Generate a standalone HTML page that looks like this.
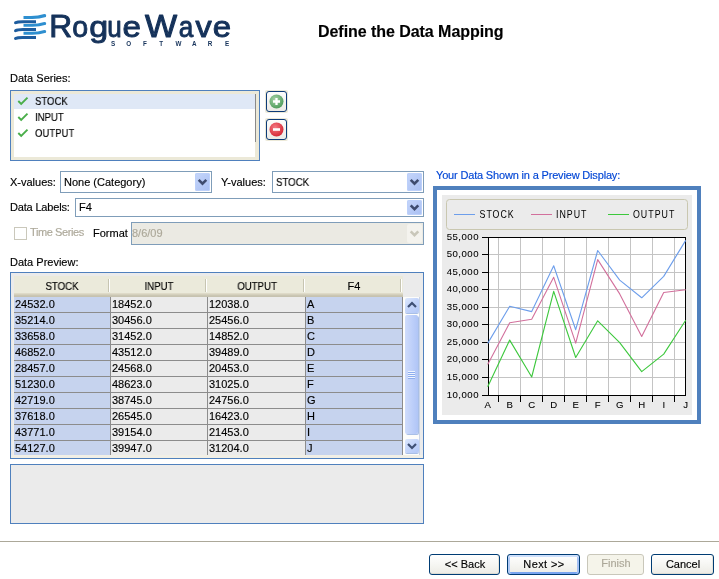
<!DOCTYPE html>
<html><head><meta charset="utf-8"><style>
html,body{margin:0;padding:0;background:#fff;}
body{width:719px;height:579px;position:relative;overflow:hidden;font-family:"Liberation Sans",sans-serif;}
.t{position:absolute;white-space:pre;line-height:16px;height:16px;will-change:transform;-webkit-text-stroke:0.15px currentColor;}
.b{position:absolute;}
</style></head><body>
<svg class="b" style="left:0;top:0;will-change:transform" width="240" height="52" viewBox="0 0 240 52"><path transform="translate(0,0.0)" d="M23.5,16 H31 Q38,16 44.3,14.1 Q46.9,14.0 45.9,16.9 Q39,19.1 31,18.9 H23.5 Z" fill="#2e8fd0"/><path transform="translate(0,7.9)" d="M23.5,16 H31 Q38,16 44.3,14.1 Q46.9,14.0 45.9,16.9 Q39,19.1 31,18.9 H23.5 Z" fill="#2e8fd0"/><path transform="translate(0,15.8)" d="M23.5,16 H31 Q38,16 44.3,14.1 Q46.9,14.0 45.9,16.9 Q39,19.1 31,18.9 H23.5 Z" fill="#2e8fd0"/><path transform="translate(0,0.0)" d="M36,20.2 H23 Q17,20.3 14.6,21.5 Q13.2,23.6 15.2,24.3 Q19,23.1 23,23.2 H36 Z" fill="#1d5c9e"/><path transform="translate(0,7.9)" d="M36,20.2 H23 Q17,20.3 14.6,21.5 Q13.2,23.6 15.2,24.3 Q19,23.1 23,23.2 H36 Z" fill="#1d5c9e"/><path transform="translate(0,15.8)" d="M36,20.2 H23 Q17,20.3 14.6,21.5 Q13.2,23.6 15.2,24.3 Q19,23.1 23,23.2 H36 Z" fill="#1d5c9e"/><text transform="translate(51.8,36.8) scale(1.016,1)" x="-2.50" y="0" font-family="Liberation Sans" font-size="31.2" fill="#15325a" stroke="#15325a" stroke-width="1.0" stroke-linejoin="round">R</text><text transform="translate(73.5,36.8) scale(0.915,0.95)" x="-1.25" y="0" font-family="Liberation Sans" font-size="31.2" fill="#15325a" stroke="#15325a" stroke-width="1.0" stroke-linejoin="round">o</text><text transform="translate(90.5,36.8) scale(1.090,0.95)" x="-1.25" y="0" font-family="Liberation Sans" font-size="31.2" fill="#15325a" stroke="#15325a" stroke-width="1.0" stroke-linejoin="round">g</text><text transform="translate(108.8,36.8) scale(0.835,0.95)" x="-1.87" y="0" font-family="Liberation Sans" font-size="31.2" fill="#15325a" stroke="#15325a" stroke-width="1.0" stroke-linejoin="round">u</text><text transform="translate(123.9,36.8) scale(1.064,0.95)" x="-1.25" y="0" font-family="Liberation Sans" font-size="31.2" fill="#15325a" stroke="#15325a" stroke-width="1.0" stroke-linejoin="round">e</text><text transform="translate(145.1,36.8) scale(1.091,1)" x="0.00" y="0" font-family="Liberation Sans" font-size="31.2" fill="#15325a" stroke="#15325a" stroke-width="1.0" stroke-linejoin="round">W</text><text transform="translate(179.7,36.8) scale(0.838,0.95)" x="-1.25" y="0" font-family="Liberation Sans" font-size="31.2" fill="#15325a" stroke="#15325a" stroke-width="1.0" stroke-linejoin="round">a</text><text transform="translate(195.5,36.8) scale(1.038,0.95)" x="0.00" y="0" font-family="Liberation Sans" font-size="31.2" fill="#15325a" stroke="#15325a" stroke-width="1.0" stroke-linejoin="round">v</text><text transform="translate(214.0,36.8) scale(1.057,0.95)" x="-1.25" y="0" font-family="Liberation Sans" font-size="31.2" fill="#15325a" stroke="#15325a" stroke-width="1.0" stroke-linejoin="round">e</text><text x="113.1" y="45.6" text-anchor="middle" font-family="Liberation Sans" font-weight="bold" font-size="6.3" fill="#15325a">S</text><text x="128.6" y="45.6" text-anchor="middle" font-family="Liberation Sans" font-weight="bold" font-size="6.3" fill="#15325a">O</text><text x="144.9" y="45.6" text-anchor="middle" font-family="Liberation Sans" font-weight="bold" font-size="6.3" fill="#15325a">F</text><text x="161.3" y="45.6" text-anchor="middle" font-family="Liberation Sans" font-weight="bold" font-size="6.3" fill="#15325a">T</text><text x="178.4" y="45.6" text-anchor="middle" font-family="Liberation Sans" font-weight="bold" font-size="6.3" fill="#15325a">W</text><text x="194.2" y="45.6" text-anchor="middle" font-family="Liberation Sans" font-weight="bold" font-size="6.3" fill="#15325a">A</text><text x="210" y="45.6" text-anchor="middle" font-family="Liberation Sans" font-weight="bold" font-size="6.3" fill="#15325a">R</text><text x="227" y="45.6" text-anchor="middle" font-family="Liberation Sans" font-weight="bold" font-size="6.3" fill="#15325a">E</text></svg>
<div class="t" style="left:318.3px;top:23.66px;font-size:16px;color:#000;font-weight:bold;letter-spacing:-0.05px;">Define the Data Mapping</div>
<div class="t" style="left:10px;top:70.19px;font-size:11px;color:#000;">Data Series:</div>
<div class="b" style="left:10px;top:90px;width:250px;height:71px;border:1px solid #4f80bd;background:#ece9d8;box-sizing:border-box;"></div>
<div class="b" style="left:14px;top:94px;width:241px;height:63px;background:#fff;"></div>
<div class="b" style="left:14px;top:94px;width:241px;height:15px;background:#dfe8f6;"></div>
<div class="b" style="left:255px;top:94px;width:1px;height:48px;background:#8a8a8a;"></div>
<svg class="b" style="left:17px;top:96px" width="12" height="10" viewBox="0 0 12 10"><path d="M1.3,5 L4.2,8 L10.5,1.6" fill="none" stroke="#4aae4a" stroke-width="1.9"/></svg>
<div class="t" style="left:34.5px;top:93.19px;font-size:11px;color:#000;transform:scaleX(0.87);transform-origin:0 0;">STOCK</div>
<svg class="b" style="left:17px;top:112px" width="12" height="10" viewBox="0 0 12 10"><path d="M1.3,5 L4.2,8 L10.5,1.6" fill="none" stroke="#4aae4a" stroke-width="1.9"/></svg>
<div class="t" style="left:34.5px;top:109.19px;font-size:11px;color:#000;transform:scaleX(0.87);transform-origin:0 0;">INPUT</div>
<svg class="b" style="left:17px;top:128px" width="12" height="10" viewBox="0 0 12 10"><path d="M1.3,5 L4.2,8 L10.5,1.6" fill="none" stroke="#4aae4a" stroke-width="1.9"/></svg>
<div class="t" style="left:34.5px;top:125.19px;font-size:11px;color:#000;transform:scaleX(0.87);transform-origin:0 0;">OUTPUT</div>
<div class="b" style="left:265px;top:90px;width:23px;height:23px;background:#ece9d8;border-radius:2px;"></div><div class="b" style="left:266px;top:91px;width:21px;height:21px;border:1px solid #0d3b78;border-radius:3px;background:linear-gradient(#fdfdfb,#ecebe6);box-sizing:border-box;"></div><svg class="b" style="left:266px;top:91px" width="21" height="21"><defs><radialGradient id="ga" cx="40%" cy="35%" r="70%"><stop offset="0" stop-color="#a6d2a6"/><stop offset="1" stop-color="#4b9a58"/></radialGradient></defs><circle cx="10.5" cy="10.5" r="7" fill="url(#ga)"/><path d="M10.5,7 V14 M7,10.5 H14" stroke="#fff" stroke-width="2.3"/></svg>
<div class="b" style="left:265px;top:118px;width:23px;height:23px;background:#ece9d8;border-radius:2px;"></div><div class="b" style="left:266px;top:119px;width:21px;height:21px;border:1px solid #0d3b78;border-radius:3px;background:linear-gradient(#fdfdfb,#ecebe6);box-sizing:border-box;"></div><svg class="b" style="left:266px;top:119px" width="21" height="21"><defs><radialGradient id="gr" cx="40%" cy="35%" r="70%"><stop offset="0" stop-color="#f47a82"/><stop offset="1" stop-color="#d42432"/></radialGradient></defs><circle cx="10.5" cy="10.5" r="7" fill="url(#gr)"/><path d="M7,10.5 H14" stroke="#fff" stroke-width="2.6"/></svg>
<div class="t" style="left:10px;top:173.69px;font-size:11px;color:#000;">X-values:</div>
<div class="b" style="left:60px;top:171px;width:152px;height:22px;border:1px solid #7f9db9;background:#fff;box-sizing:border-box;"></div><div class="b" style="left:195px;top:173px;width:15px;height:18px;background:linear-gradient(135deg,#c6d6fa,#b4c8f6 60%,#a9bff2);border-radius:2px;box-shadow:inset 0 0 0 1px #bcd0fa;"></div><svg class="b" style="left:195px;top:173px" width="15" height="18"><path d="M3.7,6.8 L7.5,10.6 L11.3,6.8" fill="none" stroke="#3e4b6e" stroke-width="2.6"/></svg>
<div class="t" style="left:64px;top:173.69px;font-size:11px;color:#000;">None (Category)</div>
<div class="t" style="left:221px;top:173.69px;font-size:11px;color:#000;">Y-values:</div>
<div class="b" style="left:272px;top:171px;width:152px;height:22px;border:1px solid #7f9db9;background:#fff;box-sizing:border-box;"></div><div class="b" style="left:407px;top:173px;width:15px;height:18px;background:linear-gradient(135deg,#c6d6fa,#b4c8f6 60%,#a9bff2);border-radius:2px;box-shadow:inset 0 0 0 1px #bcd0fa;"></div><svg class="b" style="left:407px;top:173px" width="15" height="18"><path d="M3.7,6.8 L7.5,10.6 L11.3,6.8" fill="none" stroke="#3e4b6e" stroke-width="2.6"/></svg>
<div class="t" style="left:275.5px;top:173.69px;font-size:11px;color:#000;transform:scaleX(0.88);transform-origin:0 0;">STOCK</div>
<div class="t" style="left:10px;top:199.19px;font-size:11px;color:#000;letter-spacing:-0.18px;">Data Labels:</div>
<div class="b" style="left:75px;top:198px;width:349px;height:19px;border:1px solid #7f9db9;background:#fff;box-sizing:border-box;"></div><div class="b" style="left:407px;top:200px;width:15px;height:15px;background:linear-gradient(135deg,#c6d6fa,#b4c8f6 60%,#a9bff2);border-radius:2px;box-shadow:inset 0 0 0 1px #bcd0fa;"></div><svg class="b" style="left:407px;top:200px" width="15" height="15"><path d="M3.7,5.3 L7.5,9.1 L11.3,5.3" fill="none" stroke="#3e4b6e" stroke-width="2.6"/></svg>
<div class="t" style="left:79px;top:199.19px;font-size:11px;color:#000;">F4</div>
<div class="b" style="left:14px;top:227px;width:13px;height:13px;border:1px solid #cac8bb;box-sizing:border-box;background:#fff;"></div>
<div class="t" style="left:29.5px;top:224.19px;font-size:11px;color:#aca899;letter-spacing:-0.4px;">Time Series</div>
<div class="t" style="left:93.3px;top:224.79px;font-size:11px;color:#000;">Format</div>
<div class="b" style="left:131px;top:222px;width:293px;height:23px;border:1px solid #7f9db9;background:#ebeae3;box-sizing:border-box;"></div><div class="b" style="left:407px;top:224px;width:15px;height:19px;background:#f4f3ee;border-radius:2px;"></div><svg class="b" style="left:407px;top:224px" width="15" height="19"><path d="M3.7,7.3 L7.5,11.1 L11.3,7.3" fill="none" stroke="#c9c7ba" stroke-width="2.6"/></svg>
<div class="t" style="left:132.2px;top:225.19px;font-size:11px;color:#aca899;">8/6/09</div>
<div class="t" style="left:10px;top:253.79px;font-size:11px;color:#000;">Data Preview:</div>
<div class="b" style="left:10px;top:272px;width:414px;height:187px;border:1px solid #4f80bd;background:#ebebeb;box-sizing:border-box;"></div>
<div class="b" style="left:11px;top:455px;width:412px;height:3px;background:#f1efe6;"></div>
<div class="b" style="left:13px;top:297px;width:1px;height:158px;background:#f1efe6;"></div>
<div class="b" style="left:14px;top:276px;width:389px;height:21px;background:linear-gradient(#ebeadb 0,#ebeadb 17px,#dedac8 17px,#dedac8 18px,#d4d0bd 18px,#d4d0bd 19px,#cac6b3 19px,#cac6b3 20px,#c6c2af 20px);"></div>
<div class="t" style="left:-38.0px;width:200px;text-align:center;top:277.69px;font-size:11px;color:#000;transform:scaleX(0.88);transform-origin:50% 0;">STOCK</div>
<div class="b" style="left:108px;top:279px;width:1px;height:13px;background:#c7c5b2;"></div>
<div class="b" style="left:109px;top:279px;width:1px;height:13px;background:#fff;"></div>
<div class="t" style="left:59.0px;width:200px;text-align:center;top:277.69px;font-size:11px;color:#000;transform:scaleX(0.88);transform-origin:50% 0;">INPUT</div>
<div class="b" style="left:205px;top:279px;width:1px;height:13px;background:#c7c5b2;"></div>
<div class="b" style="left:206px;top:279px;width:1px;height:13px;background:#fff;"></div>
<div class="t" style="left:156.5px;width:200px;text-align:center;top:277.69px;font-size:11px;color:#000;transform:scaleX(0.88);transform-origin:50% 0;">OUTPUT</div>
<div class="b" style="left:303px;top:279px;width:1px;height:13px;background:#c7c5b2;"></div>
<div class="b" style="left:304px;top:279px;width:1px;height:13px;background:#fff;"></div>
<div class="t" style="left:254.0px;width:200px;text-align:center;top:277.69px;font-size:11px;color:#000;">F4</div>
<div class="b" style="left:400px;top:279px;width:1px;height:13px;background:#c7c5b2;"></div>
<div class="b" style="left:401px;top:279px;width:1px;height:13px;background:#fff;"></div>
<div class="b" style="left:14px;top:297px;width:96px;height:158px;background:#c6d3ee;"></div>
<div class="b" style="left:306px;top:297px;width:96px;height:158px;background:#c6d3ee;"></div>
<div class="t" style="left:15px;top:296.19px;font-size:11px;color:#000;">24532.0</div>
<div class="t" style="left:112px;top:296.19px;font-size:11px;color:#000;">18452.0</div>
<div class="t" style="left:209px;top:296.19px;font-size:11px;color:#000;">12038.0</div>
<div class="t" style="left:307px;top:296.19px;font-size:11px;color:#000;">A</div>
<div class="b" style="left:14px;top:312px;width:389px;height:1px;background:#8c8c8c;"></div>
<div class="t" style="left:15px;top:312.19px;font-size:11px;color:#000;">35214.0</div>
<div class="t" style="left:112px;top:312.19px;font-size:11px;color:#000;">30456.0</div>
<div class="t" style="left:209px;top:312.19px;font-size:11px;color:#000;">25456.0</div>
<div class="t" style="left:307px;top:312.19px;font-size:11px;color:#000;">B</div>
<div class="b" style="left:14px;top:328px;width:389px;height:1px;background:#8c8c8c;"></div>
<div class="t" style="left:15px;top:328.19px;font-size:11px;color:#000;">33658.0</div>
<div class="t" style="left:112px;top:328.19px;font-size:11px;color:#000;">31452.0</div>
<div class="t" style="left:209px;top:328.19px;font-size:11px;color:#000;">14852.0</div>
<div class="t" style="left:307px;top:328.19px;font-size:11px;color:#000;">C</div>
<div class="b" style="left:14px;top:344px;width:389px;height:1px;background:#8c8c8c;"></div>
<div class="t" style="left:15px;top:344.19px;font-size:11px;color:#000;">46852.0</div>
<div class="t" style="left:112px;top:344.19px;font-size:11px;color:#000;">43512.0</div>
<div class="t" style="left:209px;top:344.19px;font-size:11px;color:#000;">39489.0</div>
<div class="t" style="left:307px;top:344.19px;font-size:11px;color:#000;">D</div>
<div class="b" style="left:14px;top:360px;width:389px;height:1px;background:#8c8c8c;"></div>
<div class="t" style="left:15px;top:360.19px;font-size:11px;color:#000;">28457.0</div>
<div class="t" style="left:112px;top:360.19px;font-size:11px;color:#000;">24568.0</div>
<div class="t" style="left:209px;top:360.19px;font-size:11px;color:#000;">20453.0</div>
<div class="t" style="left:307px;top:360.19px;font-size:11px;color:#000;">E</div>
<div class="b" style="left:14px;top:376px;width:389px;height:1px;background:#8c8c8c;"></div>
<div class="t" style="left:15px;top:376.19px;font-size:11px;color:#000;">51230.0</div>
<div class="t" style="left:112px;top:376.19px;font-size:11px;color:#000;">48623.0</div>
<div class="t" style="left:209px;top:376.19px;font-size:11px;color:#000;">31025.0</div>
<div class="t" style="left:307px;top:376.19px;font-size:11px;color:#000;">F</div>
<div class="b" style="left:14px;top:392px;width:389px;height:1px;background:#8c8c8c;"></div>
<div class="t" style="left:15px;top:392.19px;font-size:11px;color:#000;">42719.0</div>
<div class="t" style="left:112px;top:392.19px;font-size:11px;color:#000;">38745.0</div>
<div class="t" style="left:209px;top:392.19px;font-size:11px;color:#000;">24756.0</div>
<div class="t" style="left:307px;top:392.19px;font-size:11px;color:#000;">G</div>
<div class="b" style="left:14px;top:408px;width:389px;height:1px;background:#8c8c8c;"></div>
<div class="t" style="left:15px;top:408.19px;font-size:11px;color:#000;">37618.0</div>
<div class="t" style="left:112px;top:408.19px;font-size:11px;color:#000;">26545.0</div>
<div class="t" style="left:209px;top:408.19px;font-size:11px;color:#000;">16423.0</div>
<div class="t" style="left:307px;top:408.19px;font-size:11px;color:#000;">H</div>
<div class="b" style="left:14px;top:424px;width:389px;height:1px;background:#8c8c8c;"></div>
<div class="t" style="left:15px;top:424.19px;font-size:11px;color:#000;">43771.0</div>
<div class="t" style="left:112px;top:424.19px;font-size:11px;color:#000;">39154.0</div>
<div class="t" style="left:209px;top:424.19px;font-size:11px;color:#000;">21453.0</div>
<div class="t" style="left:307px;top:424.19px;font-size:11px;color:#000;">I</div>
<div class="b" style="left:14px;top:440px;width:389px;height:1px;background:#8c8c8c;"></div>
<div class="t" style="left:15px;top:440.19px;font-size:11px;color:#000;">54127.0</div>
<div class="t" style="left:112px;top:440.19px;font-size:11px;color:#000;">39947.0</div>
<div class="t" style="left:209px;top:440.19px;font-size:11px;color:#000;">31204.0</div>
<div class="t" style="left:307px;top:440.19px;font-size:11px;color:#000;">J</div>
<div class="b" style="left:110px;top:297px;width:1px;height:158px;background:#8c8c8c;"></div>
<div class="b" style="left:207px;top:297px;width:1px;height:158px;background:#8c8c8c;"></div>
<div class="b" style="left:305px;top:297px;width:1px;height:158px;background:#8c8c8c;"></div>
<div class="b" style="left:402px;top:297px;width:1px;height:158px;background:#8c8c8c;"></div>
<div class="b" style="left:403px;top:297px;width:16px;height:158px;background:#fdfdfb;"></div>
<div class="b" style="left:419px;top:297px;width:1px;height:158px;background:#c9d4e8;"></div>
<div class="b" style="left:405px;top:298px;width:14px;height:15px;background:linear-gradient(135deg,#dde8fd,#c3d4fa 50%,#b3c8f7);border-radius:2px;box-shadow:0 1px 0 0 #a9bfe6;"></div>
<svg class="b" style="left:405px;top:298px" width="14" height="15"><path d="M3,9 L7,5 L11,9" fill="none" stroke="#3f5075" stroke-width="2.2"/></svg>
<div class="b" style="left:405px;top:315px;width:13px;height:119px;background:linear-gradient(90deg,#cfdcfb,#bccef9 60%,#b0c5f6);border-radius:2px;box-shadow:1px 1px 0 0 #a9bfe6;"></div>
<div class="b" style="left:408px;top:371px;width:7px;height:1px;background:#f0f5fe;"></div>
<div class="b" style="left:408px;top:372px;width:7px;height:1px;background:#8eaeef;"></div>
<div class="b" style="left:408px;top:373px;width:7px;height:1px;background:#f0f5fe;"></div>
<div class="b" style="left:408px;top:374px;width:7px;height:1px;background:#8eaeef;"></div>
<div class="b" style="left:408px;top:375px;width:7px;height:1px;background:#f0f5fe;"></div>
<div class="b" style="left:408px;top:376px;width:7px;height:1px;background:#8eaeef;"></div>
<div class="b" style="left:408px;top:377px;width:7px;height:1px;background:#f0f5fe;"></div>
<div class="b" style="left:408px;top:378px;width:7px;height:1px;background:#8eaeef;"></div>
<div class="b" style="left:405px;top:439px;width:14px;height:14px;background:linear-gradient(135deg,#dde8fd,#c3d4fa 50%,#b3c8f7);border-radius:2px;box-shadow:0 1px 0 0 #a9bfe6;"></div>
<svg class="b" style="left:405px;top:439px" width="14" height="14"><path d="M3,5 L7,9 L11,5" fill="none" stroke="#3f5075" stroke-width="2.2"/></svg>
<div class="b" style="left:10px;top:464px;width:414px;height:60px;border:1px solid #4f80bd;background:#ebebeb;box-sizing:border-box;"></div>
<div class="b" style="left:0px;top:541px;width:719px;height:1px;background:#aca899;"></div>
<div class="b" style="left:0px;top:542px;width:719px;height:1px;background:#fff;"></div>
<div class="b" style="left:429px;top:554px;width:71px;height:21px;border:1px solid #003c74;border-radius:3px;background:linear-gradient(#ffffff,#f4f4f0 60%,#ecebe5);box-sizing:border-box;box-shadow:inset 0 -1px 0 0 #dcdbd2, inset -1px 0 0 0 #e4e3db;"></div><div class="t" style="left:364.5px;width:200px;text-align:center;top:556.19px;font-size:11px;color:#000;">&lt;&lt; Back</div>
<div class="b" style="left:507px;top:554px;width:73px;height:21px;border:1px solid #003c74;border-radius:3px;background:linear-gradient(#ffffff,#f4f4f0 60%,#ecebe5);box-sizing:border-box;box-shadow:inset 0 2px 0 0 #cee0fc, inset 2px 0 0 0 #b2cbf6, inset -2px 0 0 0 #a4c0f4, inset 0 -2px 0 0 #78a4ef;"></div><div class="t" style="left:443.5px;width:200px;text-align:center;top:556.19px;font-size:11px;color:#000;letter-spacing:0.4px;">Next &gt;&gt;</div>
<div class="b" style="left:587px;top:554px;width:57px;height:21px;border:1px solid #c9c7ba;border-radius:3px;background:#f5f4ea;box-sizing:border-box;"></div><div class="t" style="left:515.5px;width:200px;text-align:center;top:555.19px;font-size:11px;color:#aca899;">Finish</div>
<div class="b" style="left:651px;top:554px;width:63px;height:21px;border:1px solid #003c74;border-radius:3px;background:linear-gradient(#ffffff,#f4f4f0 60%,#ecebe5);box-sizing:border-box;box-shadow:inset 0 -1px 0 0 #dcdbd2, inset -1px 0 0 0 #e4e3db;"></div><div class="t" style="left:582.5px;width:200px;text-align:center;top:556.19px;font-size:11px;color:#000;">Cancel</div>
<div class="t" style="left:435.5px;top:167.19px;font-size:11px;color:#0046d5;letter-spacing:-0.17px;">Your Data Shown in a Preview Display:</div>
<svg class="b" style="left:0;top:0;will-change:transform" width="719" height="579" viewBox="0 0 719 579" shape-rendering="crispEdges"><rect x="435" y="188" width="264" height="234" fill="#fff" stroke="#4f80bd" stroke-width="4"/><rect x="442" y="195" width="250" height="220" fill="#ebebeb"/><rect x="446.5" y="199.5" width="241" height="30" rx="3" ry="3" fill="#ebebeb" stroke="#c9c7b0" stroke-width="1" shape-rendering="geometricPrecision"/><rect x="454" y="214" width="21" height="1" fill="#6d9eeb"/><rect x="531" y="214" width="21" height="1" fill="#d2709c"/><rect x="608" y="214" width="21" height="1" fill="#3cc83c"/><text transform="translate(479.5,218.2) scale(0.86,1)" x="0" y="0" font-size="10.3" letter-spacing="1.15" font-family="Liberation Sans" fill="#000" shape-rendering="geometricPrecision">STOCK</text><text transform="translate(556,218.2) scale(0.86,1)" x="0" y="0" font-size="10.3" letter-spacing="1.15" font-family="Liberation Sans" fill="#000" shape-rendering="geometricPrecision">INPUT</text><text transform="translate(633,218.2) scale(0.86,1)" x="0" y="0" font-size="10.3" letter-spacing="1.15" font-family="Liberation Sans" fill="#000" shape-rendering="geometricPrecision">OUTPUT</text><rect x="488" y="237" width="198" height="159" fill="#fff"/><rect x="498" y="238" width="1" height="157" fill="#c4c4c4"/><rect x="520" y="238" width="1" height="157" fill="#c4c4c4"/><rect x="542" y="238" width="1" height="157" fill="#c4c4c4"/><rect x="564" y="238" width="1" height="157" fill="#c4c4c4"/><rect x="586" y="238" width="1" height="157" fill="#c4c4c4"/><rect x="608" y="238" width="1" height="157" fill="#c4c4c4"/><rect x="630" y="238" width="1" height="157" fill="#c4c4c4"/><rect x="652" y="238" width="1" height="157" fill="#c4c4c4"/><rect x="674" y="238" width="1" height="157" fill="#c4c4c4"/><rect x="489" y="377" width="196" height="1" fill="#c4c4c4"/><rect x="489" y="359" width="196" height="1" fill="#c4c4c4"/><rect x="489" y="342" width="196" height="1" fill="#c4c4c4"/><rect x="489" y="324" width="196" height="1" fill="#c4c4c4"/><rect x="489" y="307" width="196" height="1" fill="#c4c4c4"/><rect x="489" y="289" width="196" height="1" fill="#c4c4c4"/><rect x="489" y="272" width="196" height="1" fill="#c4c4c4"/><rect x="489" y="254" width="196" height="1" fill="#c4c4c4"/><rect x="488" y="237" width="198" height="1" fill="#000"/><rect x="685" y="237" width="1" height="159" fill="#000"/><rect x="488" y="237" width="1" height="159" fill="#000"/><rect x="488" y="395" width="198" height="1" fill="#000"/><rect x="482" y="395" width="6" height="1" fill="#000"/><text x="479" y="398.3" text-anchor="end" font-size="9.6" letter-spacing="0.5" stroke="#000" stroke-width="0.08" font-family="Liberation Sans" fill="#000" shape-rendering="geometricPrecision">10,000</text><rect x="482" y="377" width="6" height="1" fill="#000"/><text x="479" y="380.3" text-anchor="end" font-size="9.6" letter-spacing="0.5" stroke="#000" stroke-width="0.08" font-family="Liberation Sans" fill="#000" shape-rendering="geometricPrecision">15,000</text><rect x="482" y="359" width="6" height="1" fill="#000"/><text x="479" y="362.3" text-anchor="end" font-size="9.6" letter-spacing="0.5" stroke="#000" stroke-width="0.08" font-family="Liberation Sans" fill="#000" shape-rendering="geometricPrecision">20,000</text><rect x="482" y="342" width="6" height="1" fill="#000"/><text x="479" y="345.3" text-anchor="end" font-size="9.6" letter-spacing="0.5" stroke="#000" stroke-width="0.08" font-family="Liberation Sans" fill="#000" shape-rendering="geometricPrecision">25,000</text><rect x="482" y="324" width="6" height="1" fill="#000"/><text x="479" y="327.3" text-anchor="end" font-size="9.6" letter-spacing="0.5" stroke="#000" stroke-width="0.08" font-family="Liberation Sans" fill="#000" shape-rendering="geometricPrecision">30,000</text><rect x="482" y="307" width="6" height="1" fill="#000"/><text x="479" y="310.3" text-anchor="end" font-size="9.6" letter-spacing="0.5" stroke="#000" stroke-width="0.08" font-family="Liberation Sans" fill="#000" shape-rendering="geometricPrecision">35,000</text><rect x="482" y="289" width="6" height="1" fill="#000"/><text x="479" y="292.3" text-anchor="end" font-size="9.6" letter-spacing="0.5" stroke="#000" stroke-width="0.08" font-family="Liberation Sans" fill="#000" shape-rendering="geometricPrecision">40,000</text><rect x="482" y="272" width="6" height="1" fill="#000"/><text x="479" y="275.3" text-anchor="end" font-size="9.6" letter-spacing="0.5" stroke="#000" stroke-width="0.08" font-family="Liberation Sans" fill="#000" shape-rendering="geometricPrecision">45,000</text><rect x="482" y="254" width="6" height="1" fill="#000"/><text x="479" y="257.3" text-anchor="end" font-size="9.6" letter-spacing="0.5" stroke="#000" stroke-width="0.08" font-family="Liberation Sans" fill="#000" shape-rendering="geometricPrecision">50,000</text><rect x="482" y="237" width="6" height="1" fill="#000"/><text x="479" y="240.3" text-anchor="end" font-size="9.6" letter-spacing="0.5" stroke="#000" stroke-width="0.08" font-family="Liberation Sans" fill="#000" shape-rendering="geometricPrecision">55,000</text><rect x="498" y="396" width="1" height="6" fill="#000"/><rect x="520" y="396" width="1" height="6" fill="#000"/><rect x="542" y="396" width="1" height="6" fill="#000"/><rect x="564" y="396" width="1" height="6" fill="#000"/><rect x="586" y="396" width="1" height="6" fill="#000"/><rect x="608" y="396" width="1" height="6" fill="#000"/><rect x="630" y="396" width="1" height="6" fill="#000"/><rect x="652" y="396" width="1" height="6" fill="#000"/><rect x="674" y="396" width="1" height="6" fill="#000"/><text x="488.0" y="408.2" text-anchor="middle" font-size="9.6" letter-spacing="0.5" stroke="#000" stroke-width="0.08" font-family="Liberation Sans" fill="#000" shape-rendering="geometricPrecision">A</text><text x="510.0" y="408.2" text-anchor="middle" font-size="9.6" letter-spacing="0.5" stroke="#000" stroke-width="0.08" font-family="Liberation Sans" fill="#000" shape-rendering="geometricPrecision">B</text><text x="532.0" y="408.2" text-anchor="middle" font-size="9.6" letter-spacing="0.5" stroke="#000" stroke-width="0.08" font-family="Liberation Sans" fill="#000" shape-rendering="geometricPrecision">C</text><text x="554.0" y="408.2" text-anchor="middle" font-size="9.6" letter-spacing="0.5" stroke="#000" stroke-width="0.08" font-family="Liberation Sans" fill="#000" shape-rendering="geometricPrecision">D</text><text x="576.0" y="408.2" text-anchor="middle" font-size="9.6" letter-spacing="0.5" stroke="#000" stroke-width="0.08" font-family="Liberation Sans" fill="#000" shape-rendering="geometricPrecision">E</text><text x="598.0" y="408.2" text-anchor="middle" font-size="9.6" letter-spacing="0.5" stroke="#000" stroke-width="0.08" font-family="Liberation Sans" fill="#000" shape-rendering="geometricPrecision">F</text><text x="620.0" y="408.2" text-anchor="middle" font-size="9.6" letter-spacing="0.5" stroke="#000" stroke-width="0.08" font-family="Liberation Sans" fill="#000" shape-rendering="geometricPrecision">G</text><text x="642.0" y="408.2" text-anchor="middle" font-size="9.6" letter-spacing="0.5" stroke="#000" stroke-width="0.08" font-family="Liberation Sans" fill="#000" shape-rendering="geometricPrecision">H</text><text x="664.0" y="408.2" text-anchor="middle" font-size="9.6" letter-spacing="0.5" stroke="#000" stroke-width="0.08" font-family="Liberation Sans" fill="#000" shape-rendering="geometricPrecision">I</text><text x="686.0" y="408.2" text-anchor="middle" font-size="9.6" letter-spacing="0.5" stroke="#000" stroke-width="0.08" font-family="Liberation Sans" fill="#000" shape-rendering="geometricPrecision">J</text><polyline points="487.7,386.8 509.7,340.1 531.7,377.0 553.7,291.3 575.7,357.5 597.7,320.8 619.7,342.6 641.7,371.6 663.7,354.1 685.7,320.2" fill="none" stroke="#3cc83c" stroke-width="1.1" stroke-linejoin="round" shape-rendering="geometricPrecision"/><polyline points="487.7,364.5 509.7,322.8 531.7,319.3 553.7,277.3 575.7,343.2 597.7,259.6 619.7,293.9 641.7,336.4 663.7,292.5 685.7,289.7" fill="none" stroke="#d2709c" stroke-width="1.1" stroke-linejoin="round" shape-rendering="geometricPrecision"/><polyline points="487.7,343.4 509.7,306.2 531.7,311.6 553.7,265.7 575.7,329.7 597.7,250.5 619.7,280.1 641.7,297.8 663.7,276.4 685.7,240.4" fill="none" stroke="#6d9eeb" stroke-width="1.1" stroke-linejoin="round" shape-rendering="geometricPrecision"/></svg>
</body></html>
